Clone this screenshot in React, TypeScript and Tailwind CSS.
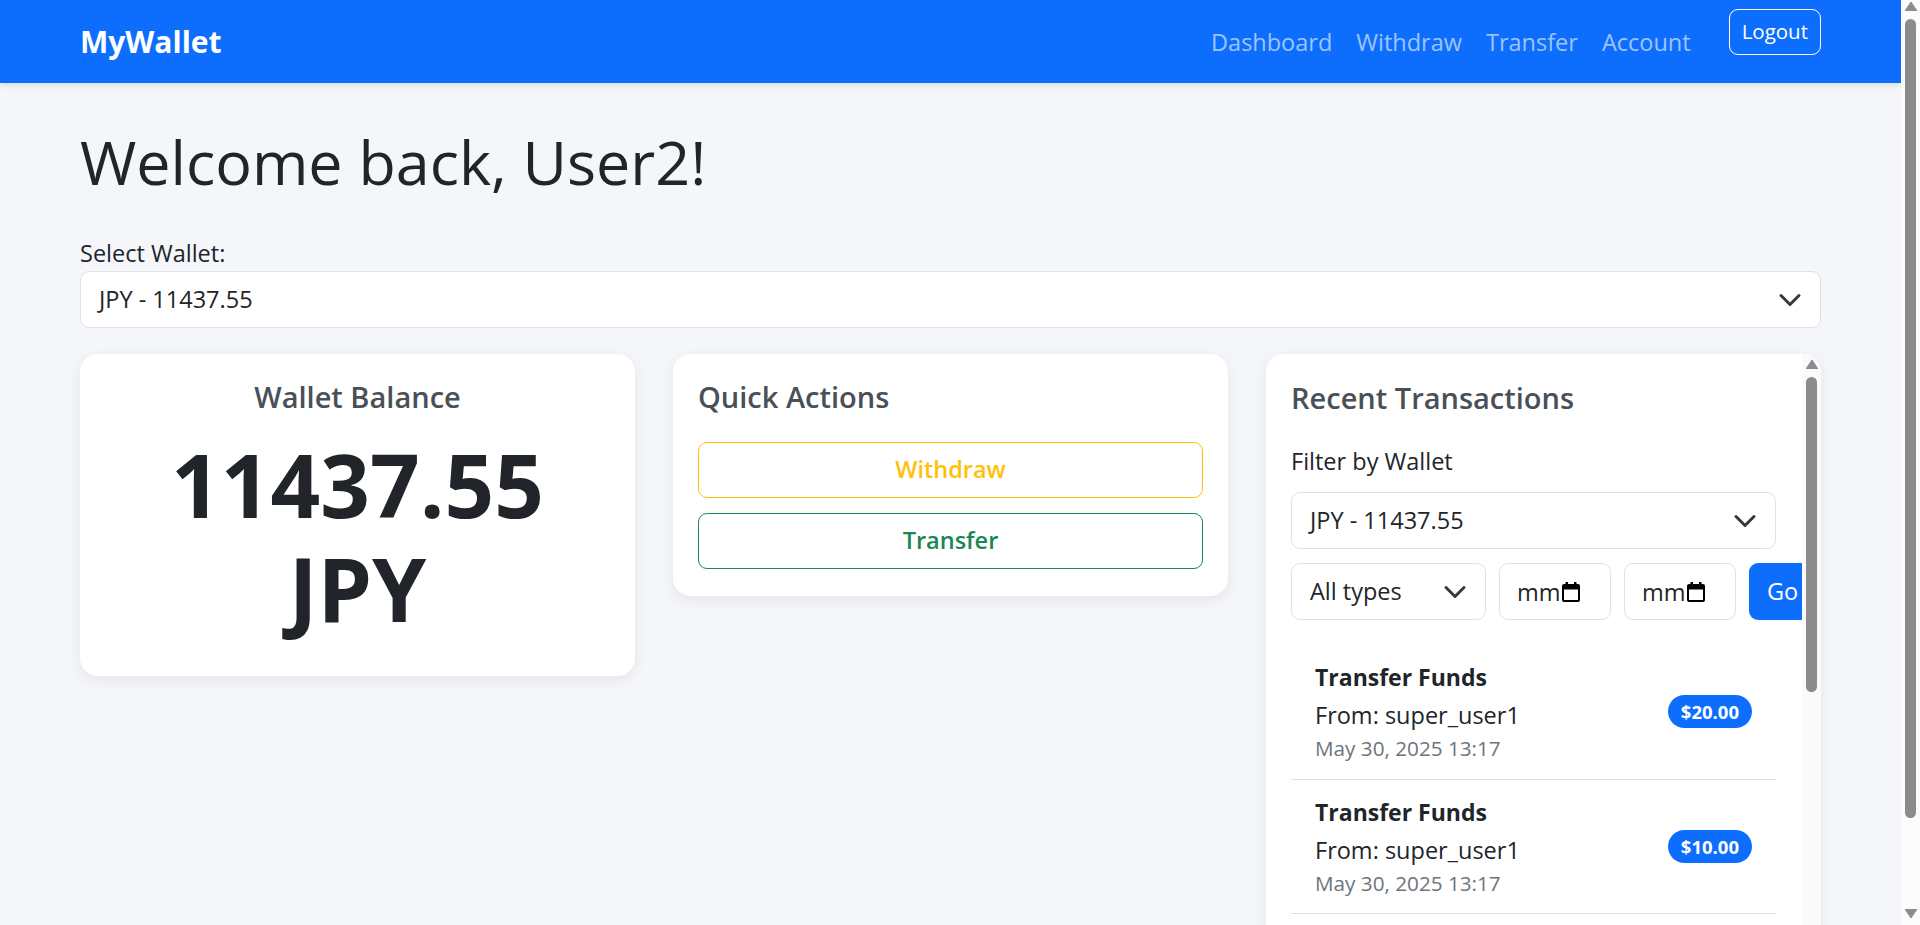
import { useState } from "react"

const transactions = [
  { title: "Transfer Funds", detail: "From: super_user1", date: "May 30, 2025 13:17", amount: "$20.00" },
  { title: "Transfer Funds", detail: "From: super_user1", date: "May 30, 2025 13:17", amount: "$10.00" },
  { title: "Withdraw", detail: "To: Bank account", date: "May 29, 2025 18:42", amount: "$50.00" },
  { title: "Transfer Funds", detail: "To: super_user1", date: "May 28, 2025 09:05", amount: "$15.00" },
  { title: "Deposit", detail: "From: Card ****4242", date: "May 27, 2025 21:30", amount: "$120.00" },
  { title: "Withdraw", detail: "To: Bank account", date: "May 25, 2025 11:12", amount: "$30.00" },
  { title: "Transfer Funds", detail: "From: user3", date: "May 22, 2025 16:48", amount: "$5.00" },
]

const Chevron = () => (
  <svg width="24" height="24" viewBox="0 0 16 16" className="shrink-0">
    <path fill="none" stroke="#343a40" strokeLinecap="round" strokeLinejoin="round" strokeWidth="2" d="m2 5 6 6 6-6" />
  </svg>
)

const CalendarIcon = () => (
  <svg width="18" height="20" viewBox="0 0 18 20" className="shrink-0">
    <path d="M3.5 0h2.5v4h-2.5zM12 0h2.5v4H12z" fill="#000" />
    <rect x="1" y="3" width="16" height="16" rx="1" fill="none" stroke="#000" strokeWidth="2" />
    <rect x="1" y="3" width="16" height="4.5" fill="#000" />
  </svg>
)

const Arrow = ({ down }: { down?: boolean }) => (
  <svg width="12" height="9" viewBox="0 0 12 9" className="shrink-0">
    <path d={down ? "M0 0h12L6 9z" : "M6 0l6 9H0z"} fill="#8b8b8b" strokeLinejoin="round" stroke="#8b8b8b" strokeWidth="1" />
  </svg>
)

const DateBox = () => (
  <div className="flex h-[57px] w-[112px] shrink-0 items-center gap-[1px] overflow-hidden rounded-[9px] border border-[#dee2e6] bg-white pl-[17px]">
    <span className="text-[23.5px] leading-[36px]">mm</span>
    <CalendarIcon />
  </div>
)

const App = () => {
  const [wallet] = useState("JPY - 11437.55")

  return (
    <div className="flex h-screen bg-[#f5f6fa] font-['Open_Sans',sans-serif] text-[#212529]">
      <div className="min-w-0 flex-1 overflow-hidden">
        <nav className="flex h-[83px] items-center justify-between bg-[#0d6efd] px-[80px] shadow-[0_2px_6px_rgba(0,0,0,0.12)]">
          <span className="text-[30px] font-bold leading-[40px] text-white">MyWallet</span>
          <div className="flex h-full items-center">
            <div className="flex items-center gap-[24px] text-[23.5px] leading-[36px] text-white/60">
              <a>Dashboard</a>
              <a>Withdraw</a>
              <a>Transfer</a>
              <a>Account</a>
            </div>
            <button className="ml-[38px] mt-[9px] self-start rounded-[9px] border border-white px-[12px] py-[6px] text-[20.5px] leading-[31.5px] text-white">
              Logout
            </button>
          </div>
        </nav>

        <main className="px-[80px] pb-[36px] pt-[43px]">
          <h1 className="text-[61px] font-normal leading-[72px]">Welcome back, User2!</h1>

          <label className="mt-[37px] block text-[23.5px] leading-[36px]">Select Wallet:</label>
          <div className="flex h-[57px] items-center justify-between rounded-[9px] border border-[#dee2e6] bg-white px-[18px] text-[23.5px]">
            <span>{wallet}</span>
            <Chevron />
          </div>

          <div className="mt-[26px] grid grid-cols-3 items-start gap-[38px]">
            {/* balance */}
            <div className="rounded-[18px] bg-white px-[25px] pb-[36px] pt-[25px] text-center shadow-[0_4px_14px_rgba(0,0,0,0.07)]">
              <h5 className="text-[29px] font-semibold leading-[36px] text-[#495057]">Wallet Balance</h5>
              <div className="mt-[17px] text-[87px] font-bold leading-[104px]">
                11437.55
                <br />
                JPY
              </div>
            </div>

            {/* quick actions */}
            <div className="flex flex-col rounded-[18px] bg-white px-[25px] pb-[27px] pt-[25px] shadow-[0_4px_14px_rgba(0,0,0,0.07)]">
              <h5 className="text-[29px] font-semibold leading-[36px] text-[#495057]">Quick Actions</h5>
              <button className="mt-[27px] h-[56px] rounded-[9px] border border-[#ffc107] text-[23.5px] font-semibold text-[#ffc107]">
                Withdraw
              </button>
              <button className="mt-[15px] h-[56px] rounded-[9px] border border-[#198754] text-[23.5px] font-semibold text-[#198754]">
                Transfer
              </button>
            </div>

            {/* transactions */}
            <div className="flex max-h-[636px] overflow-hidden rounded-[18px] bg-white shadow-[0_4px_14px_rgba(0,0,0,0.07)]">
              <div className="min-w-0 flex-1 overflow-hidden pb-[25px] pl-[25px] pr-[26px] pt-[26px]">
                <h5 className="text-[29px] font-semibold leading-[36px] text-[#495057]">Recent Transactions</h5>
                <label className="mt-[27px] block text-[23.5px] leading-[36px]">Filter by Wallet</label>
                <div className="mt-[13px] flex h-[57px] items-center justify-between rounded-[9px] border border-[#dee2e6] bg-white px-[18px] text-[23.5px]">
                  <span>{wallet}</span>
                  <Chevron />
                </div>
                <div className="mt-[14px] flex gap-[13px]">
                  <div className="flex h-[57px] w-[195px] shrink-0 items-center justify-between rounded-[9px] border border-[#dee2e6] bg-white px-[18px] text-[23.5px]">
                    <span>All types</span>
                    <Chevron />
                  </div>
                  <DateBox />
                  <DateBox />
                  <button className="h-[57px] shrink-0 rounded-[9px] bg-[#0d6efd] px-[18px] text-[23.5px] text-white">Go</button>
                </div>

                <ul className="mt-[25px]">
                  {transactions.map((t, i) => (
                    <li key={i} className="flex items-center justify-between border-b border-[#dee2e6] px-[24px] py-[14px]">
                      <div>
                        <div className="text-[23px] font-bold leading-[36px]">{t.title}</div>
                        <div className="mt-[2px] text-[23.5px] leading-[36px]">{t.detail}</div>
                        <div className="text-[20.7px] leading-[31.5px] text-[#6c757d]">{t.date}</div>
                      </div>
                      <span className="rounded-full bg-[#0d6efd] px-[13px] py-[7px] text-[18.5px] font-bold leading-[19px] text-white">
                        {t.amount}
                      </span>
                    </li>
                  ))}
                </ul>
              </div>
              {/* card scrollbar */}
              <div className="flex w-[19px] shrink-0 flex-col items-center bg-[#fafafa] pt-[6px]">
                <Arrow />
                <div className="mt-[8px] h-[315px] w-[11px] rounded-full bg-[#8b8b8b]" />
              </div>
            </div>
          </div>
        </main>
      </div>

      {/* page scrollbar */}
      <div className="flex w-[19px] shrink-0 flex-col items-center bg-[#fbfbfb] pb-[7px] pt-[2px]">
        <Arrow />
        <div className="mt-[8px] h-[799px] w-[11px] rounded-full bg-[#8b8b8b]" />
        <div className="flex-1" />
        <Arrow down />
      </div>
    </div>
  )
}

export default App
